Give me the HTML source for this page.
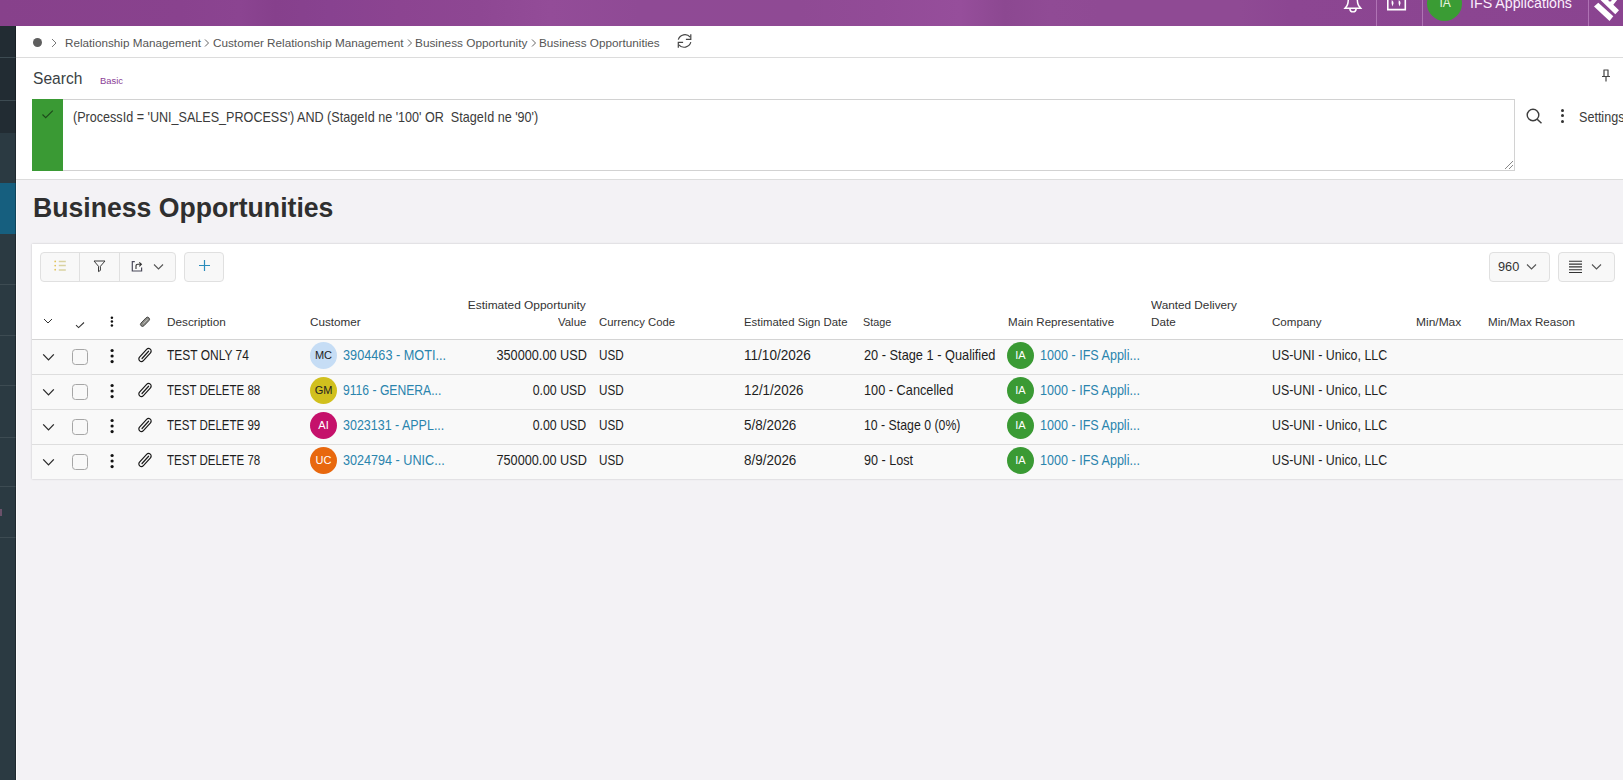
<!DOCTYPE html>
<html><head><meta charset="utf-8">
<style>
html,body{margin:0;padding:0;}
body{width:1623px;height:780px;overflow:hidden;position:relative;background:#f3f2f5;font-family:"Liberation Sans",sans-serif;}
.t{position:absolute;white-space:nowrap;}
.a{position:absolute;}
</style></head><body>
<div class="a" style="left:0;top:0;width:1623px;height:26px;background:linear-gradient(90deg,#87418b 0px,#89428e 180px,#8b4491 240px,#86408c 275px,#884290 330px,#8c4491 400px,#8e4793 480px,#934c98 550px,#8f4a95 640px,#8f4a94 800px,#924b97 880px,#964e9b 960px,#8c4891 1005px,#904b95 1050px,#8f4a94 1100px,#8f4a94 1240px,#8c4692 1290px,#8a4490 1623px);"></div>
<div class="a" style="left:1376px;top:0;width:1px;height:26px;background:rgba(220,170,225,.45);"></div>
<div class="a" style="left:1422px;top:0;width:1px;height:26px;background:rgba(220,170,225,.45);"></div>
<div class="a" style="left:1588px;top:0;width:1px;height:26px;background:rgba(220,170,225,.45);"></div>
<svg class="a" style="left:1338px;top:0" width="30" height="14" viewBox="0 0 30 14"><path d="M10.3 -1 Q10.3 5 7.8 7.2 L7 8.2 H22.8 L22 7.2 Q19.3 5 19.3 -1" fill="none" stroke="#fff" stroke-width="1.5"/><path d="M11.8 8.6 Q12 11.9 15 11.9 Q18 11.9 18.2 8.6" fill="none" stroke="#fff" stroke-width="1.4"/></svg>
<svg class="a" style="left:1384px;top:0" width="26" height="14" viewBox="0 0 26 14"><path d="M3.8 -1 V9.6 H21.3 V-1" fill="none" stroke="#fff" stroke-width="1.6"/><path d="M7.8 0 Q10 1.5 9.5 3.5 Q9 5 8.3 6.5 Q7 3.5 7.8 0 Z M14.8 0 Q17 1.5 16.5 3.5 Q16 5 15.3 6.5 Q14 3.5 14.8 0 Z" fill="#fff"/></svg>
<div class="a" style="left:1427px;top:-14px;width:35px;height:35px;border-radius:50%;background:#3a9c34;"></div>
<div class="t" style="left:1439.50px;top:-3.00px;font-size:12px;line-height:12px;color:#e8f5e0;">IA</div>
<div class="t" style="left:1470.00px;top:-4.00px;font-size:14.6px;line-height:14.6px;color:#fbeefd;transform:scaleX(0.9744);transform-origin:0 0;">IFS Applications</div>
<svg class="a" style="left:1585px;top:0" width="38" height="26" viewBox="0 0 38 26"><path d="M9 6.5 L13.3 2.7 L28.3 16.3 L24.5 21 Z" fill="#fff"/><path d="M15 -0.5 L32.5 -0.5 L28.3 4.7 L34 10.3 L30.3 14.3 Z" fill="#fff"/><circle cx="25" cy="0" r="1.6" fill="#8a4390"/></svg>
<div class="a" style="left:0;top:26px;width:16px;height:754px;background:#2b3a42;"></div>
<div class="a" style="left:0;top:26px;width:16px;height:107px;background:#222c33;"></div>
<div class="a" style="left:0;top:183px;width:16px;height:51px;background:#165f7f;"></div>
<div class="a" style="left:0;top:57px;width:16px;height:1px;background:#3d4b52;"></div>
<div class="a" style="left:0;top:100px;width:16px;height:1px;background:#3d4b52;"></div>
<div class="a" style="left:0;top:284px;width:16px;height:1px;background:#3d4b52;"></div>
<div class="a" style="left:0;top:335px;width:16px;height:1px;background:#3d4b52;"></div>
<div class="a" style="left:0;top:385px;width:16px;height:1px;background:#3d4b52;"></div>
<div class="a" style="left:0;top:437px;width:16px;height:1px;background:#3d4b52;"></div>
<div class="a" style="left:0;top:486px;width:16px;height:1px;background:#3d4b52;"></div>
<div class="a" style="left:0;top:537px;width:16px;height:1px;background:#3d4b52;"></div>
<div class="a" style="left:15px;top:26px;width:1px;height:754px;background:rgba(0,0,0,.28);"></div>
<div class="a" style="left:0;top:509px;width:2px;height:7px;background:rgba(160,100,140,.55);"></div>
<div class="a" style="left:16px;top:179px;width:1px;height:601px;background:#fbfbfc;"></div>
<div class="a" style="left:16px;top:26px;width:1607px;height:31px;background:#fff;border-bottom:1px solid #dcdcdc;"></div>
<div class="a" style="left:33px;top:38px;width:9px;height:9px;border-radius:50%;background:#5e5e5e;"></div>
<svg class="a" style="left:50px;top:38px" width="8" height="10" viewBox="0 0 8 10"><path d="M2 1 L6 5 L2 9" fill="none" stroke="#777" stroke-width="1"/></svg>
<div class="t" style="left:64.70px;top:38.00px;font-size:11.8px;line-height:11.8px;color:#555;transform:scaleX(0.9919);transform-origin:0 0;">Relationship Management</div>
<div class="t" style="left:212.50px;top:38.00px;font-size:11.8px;line-height:11.8px;color:#555;transform:scaleX(0.9947);transform-origin:0 0;">Customer Relationship Management</div>
<div class="t" style="left:414.60px;top:38.00px;font-size:11.8px;line-height:11.8px;color:#555;transform:scaleX(1.0021);transform-origin:0 0;">Business Opportunity</div>
<div class="t" style="left:539.00px;top:38.00px;font-size:11.8px;line-height:11.8px;color:#555;transform:scaleX(0.9945);transform-origin:0 0;">Business Opportunities</div>
<svg class="a" style="left:203.9px;top:38px" width="6" height="10" viewBox="0 0 6 10"><path d="M1 1.5 L4.5 5 L1 8.5" fill="none" stroke="#666" stroke-width="1"/></svg>
<svg class="a" style="left:406.5px;top:38px" width="6" height="10" viewBox="0 0 6 10"><path d="M1 1.5 L4.5 5 L1 8.5" fill="none" stroke="#666" stroke-width="1"/></svg>
<svg class="a" style="left:530.5px;top:38px" width="6" height="10" viewBox="0 0 6 10"><path d="M1 1.5 L4.5 5 L1 8.5" fill="none" stroke="#666" stroke-width="1"/></svg>
<svg class="a" style="left:670px;top:30px" width="30" height="22" viewBox="0 0 30 22"><g fill="none" stroke="#444" stroke-width="1.2"><path d="M8.3 9.6 A6.9 6.9 0 0 1 20.2 7.2"/><path d="M20.8 4.2 V9.3 H15.9"/><path d="M20.8 12.2 A6.9 6.9 0 0 1 8.9 14.8"/><path d="M8.3 17.8 V12.3 H13.1"/></g></svg>
<div class="a" style="left:16px;top:58px;width:1607px;height:121px;background:#fff;border-bottom:1px solid #dcdcdc;"></div>
<div class="t" style="left:32.60px;top:70.00px;font-size:17.4px;line-height:17.4px;color:#3a3f44;transform:scaleX(0.8956);transform-origin:0 0;">Search</div>
<div class="t" style="left:99.60px;top:76.00px;font-size:9.6px;line-height:9.6px;color:#8a3d96;transform:scaleX(0.9799);transform-origin:0 0;">Basic</div>
<svg class="a" style="left:1600px;top:69px" width="12" height="13" viewBox="0 0 12 13"><path d="M3.5 1 H8.5 M4 1 V7 M8 1 V7 M2 7.5 H10 M6 7.5 V12.5" fill="none" stroke="#444" stroke-width="1.2"/></svg>
<div class="a" style="left:32px;top:99px;width:1481px;height:70px;background:#fff;border:1px solid #d2d2d2;"></div>
<div class="a" style="left:32px;top:99px;width:31px;height:72px;background:#3a9a34;"></div>
<svg class="a" style="left:41px;top:109px" width="14" height="11" viewBox="0 0 14 11"><path d="M1.5 5.5 L4.7 8.7 L11.8 1.6" fill="none" stroke="#1d4a1b" stroke-width="1.15"/></svg>
<div class="t" style="left:72.90px;top:110.00px;font-size:14.2px;line-height:14.2px;color:#3b3b3b;transform:scaleX(0.8869);transform-origin:0 0;">(ProcessId = 'UNI_SALES_PROCESS') AND (StageId ne '100' OR&nbsp; StageId ne '90')</div>
<svg class="a" style="left:1504px;top:160px" width="10" height="10" viewBox="0 0 10 10"><path d="M1 9 L9 1 M5 9 L9 5" stroke="#888" stroke-width="1"/></svg>
<svg class="a" style="left:1526px;top:108px" width="17" height="16" viewBox="0 0 17 16"><circle cx="7" cy="7" r="5.8" fill="none" stroke="#3d3d3d" stroke-width="1.4"/><path d="M11.2 11.2 L15.5 15.2" stroke="#3d3d3d" stroke-width="1.5"/></svg>
<div class="a" style="left:1560.5px;top:108.5px;width:3px;height:3px;border-radius:50%;background:#333;"></div>
<div class="a" style="left:1560.5px;top:114.0px;width:3px;height:3px;border-radius:50%;background:#333;"></div>
<div class="a" style="left:1560.5px;top:119.5px;width:3px;height:3px;border-radius:50%;background:#333;"></div>
<div class="t" style="left:1579.00px;top:110.00px;font-size:14.2px;line-height:14.2px;color:#3b3b3b;transform:scaleX(0.8864);transform-origin:0 0;">Settings</div>
<div class="t" style="left:33.00px;top:194.00px;font-size:27.3px;line-height:27.3px;color:#2f2f2f;font-weight:bold;transform:scaleX(0.9758);transform-origin:0 0;">Business Opportunities</div>
<div class="a" style="left:32px;top:244px;width:1591px;height:235px;background:#fff;box-shadow:0 0 2px rgba(0,0,0,.2);"></div>
<div class="a" style="left:40px;top:252px;width:134px;height:28px;background:#f8f8f8;border:1px solid #e0e0e0;border-radius:4px;"></div>
<div class="a" style="left:79px;top:253px;width:1px;height:28px;background:#e0e0e0;"></div>
<div class="a" style="left:119px;top:253px;width:1px;height:28px;background:#e0e0e0;"></div>
<div class="a" style="left:184px;top:252px;width:38px;height:28px;background:#f8f8f8;border:1px solid #e0e0e0;border-radius:4px;"></div>
<svg class="a" style="left:53px;top:259px" width="15" height="13" viewBox="0 0 15 13"><g fill="#e2c45a"><circle cx="2.2" cy="2.4" r="0.9"/><circle cx="2.2" cy="6.6" r="0.9"/><circle cx="2.2" cy="10.7" r="0.9"/></g><g stroke="#d9d2a0" stroke-width="1.5"><path d="M5.8 2.6 H12.8 M5.8 6.6 H12.8 M5.8 11 H12.8"/></g></svg>
<svg class="a" style="left:93px;top:259.5px" width="13" height="13" viewBox="0 0 13 13"><path d="M1 1 H12 L7.4 6.3 V10.4 L5.5 11.6 V6.3 Z" fill="none" stroke="#3a3a3a" stroke-width="1" stroke-linejoin="round"/></svg>
<svg class="a" style="left:131px;top:260px" width="12" height="13" viewBox="0 0 12 13"><path d="M3.8 1.6 H1.3 V11 H10.6 V7.5" fill="none" stroke="#4a4a5a" stroke-width="1.2"/><path d="M5 9 V6 Q5 4.3 6.8 4.3 H10.3 M8.3 2.3 L10.4 4.3 L8.3 6.3" fill="none" stroke="#333" stroke-width="1.1"/></svg>
<svg class="a" style="left:153px;top:263px" width="11" height="8" viewBox="0 0 11 8"><path d="M1 1.5 L5.5 6 L10 1.5" fill="none" stroke="#555" stroke-width="1.1"/></svg>
<svg class="a" style="left:198px;top:259px" width="13" height="13" viewBox="0 0 13 13"><path d="M6.5 1 V12 M1 6.5 H12" stroke="#2a8cbc" stroke-width="1.2"/></svg>
<div class="a" style="left:1489px;top:252px;width:59px;height:28px;background:#f8f8f8;border:1px solid #e0e0e0;border-radius:4px;"></div>
<div class="t" style="left:1498.20px;top:260.00px;font-size:13.4px;line-height:13.4px;color:#333;transform:scaleX(0.9518);transform-origin:0 0;">960</div>
<svg class="a" style="left:1526px;top:263px" width="11" height="8" viewBox="0 0 11 8"><path d="M1 1.5 L5.5 6 L10 1.5" fill="none" stroke="#555" stroke-width="1.1"/></svg>
<div class="a" style="left:1558px;top:252px;width:55px;height:28px;background:#f8f8f8;border:1px solid #e0e0e0;border-radius:4px;"></div>
<svg class="a" style="left:1568px;top:259px" width="15" height="15" viewBox="0 0 15 15"><path d="M1 2.3 H14 M1 5.1 H14 M1 7.9 H14 M1 10.8 H14 M1 13.5 H14" stroke="#333" stroke-width="1.1"/></svg>
<svg class="a" style="left:1591px;top:263px" width="11" height="8" viewBox="0 0 11 8"><path d="M1 1.5 L5.5 6 L10 1.5" fill="none" stroke="#555" stroke-width="1.1"/></svg>
<svg class="a" style="left:43px;top:318px" width="10" height="7" viewBox="0 0 10 7"><path d="M1 1 L5 5 L9 1" fill="none" stroke="#333" stroke-width="1"/></svg>
<svg class="a" style="left:75px;top:320.5px" width="10" height="8" viewBox="0 0 10 8"><path d="M1 4.2 L3.6 6.6 L9 1.5" fill="none" stroke="#333" stroke-width="1.05"/></svg>
<svg class="a" style="left:106px;top:312px" width="12" height="18" viewBox="0 0 12 18"><circle cx="5.9" cy="5.7" r="1.25" fill="#111"/><circle cx="5.9" cy="9.5" r="1.25" fill="#111"/><circle cx="5.9" cy="13.4" r="1.25" fill="#111"/></svg>
<svg class="a" style="left:134.6px;top:311.5px;" width="20" height="20" viewBox="0 0 20 20"><g transform="translate(10 9.8) rotate(-46)"><rect x="-5.6" y="-2" width="11.2" height="4" rx="2" fill="#8a8a84" stroke="#3a3a3a" stroke-width="0.85"/><path d="M-2.5 0.1 H3.5" stroke="#ccc" stroke-width="0.7"/></g></svg>
<div class="t" style="left:166.60px;top:317.00px;font-size:11.8px;line-height:11.8px;color:#333;transform:scaleX(0.9966);transform-origin:0 0;">Description</div>
<div class="t" style="left:310.30px;top:317.00px;font-size:11.8px;line-height:11.8px;color:#333;transform:scaleX(0.9911);transform-origin:0 0;">Customer</div>
<div class="t" style="left:598.80px;top:317.00px;font-size:11.8px;line-height:11.8px;color:#333;transform:scaleX(0.9590);transform-origin:0 0;">Currency Code</div>
<div class="t" style="left:743.50px;top:317.00px;font-size:11.8px;line-height:11.8px;color:#333;transform:scaleX(0.9623);transform-origin:0 0;">Estimated Sign Date</div>
<div class="t" style="left:863.00px;top:317.00px;font-size:11.8px;line-height:11.8px;color:#333;transform:scaleX(0.9171);transform-origin:0 0;">Stage</div>
<div class="t" style="left:1007.60px;top:317.00px;font-size:11.8px;line-height:11.8px;color:#333;transform:scaleX(0.9805);transform-origin:0 0;">Main Representative</div>
<div class="t" style="left:1151.30px;top:300.00px;font-size:11.8px;line-height:11.8px;color:#333;transform:scaleX(0.9972);transform-origin:0 0;">Wanted Delivery</div>
<div class="t" style="left:1151.30px;top:317.00px;font-size:11.8px;line-height:11.8px;color:#333;transform:scaleX(0.9920);transform-origin:0 0;">Date</div>
<div class="t" style="left:1271.70px;top:317.00px;font-size:11.8px;line-height:11.8px;color:#333;transform:scaleX(0.9821);transform-origin:0 0;">Company</div>
<div class="t" style="left:1416.20px;top:317.00px;font-size:11.8px;line-height:11.8px;color:#333;transform:scaleX(1.0156);transform-origin:0 0;">Min/Max</div>
<div class="t" style="left:1487.90px;top:317.00px;font-size:11.8px;line-height:11.8px;color:#333;transform:scaleX(0.9813);transform-origin:0 0;">Min/Max Reason</div>
<div class="t" style="right:1036.81px;top:300.00px;font-size:11.8px;line-height:11.8px;color:#333;transform:scaleX(1.0106);transform-origin:100% 0;">Estimated Opportunity</div>
<div class="t" style="right:1036.82px;top:317.00px;font-size:11.8px;line-height:11.8px;color:#333;transform:scaleX(0.9651);transform-origin:100% 0;">Value</div>
<div class="a" style="left:32px;top:338.5px;width:1591px;height:1.5px;background:#d4d4d4;"></div>
<div class="a" style="left:32px;top:340px;width:1591px;height:34px;background:#f9f9f9;"></div>
<div class="a" style="left:32px;top:374px;width:1591px;height:1px;background:#dedede;"></div>
<svg class="a" style="left:41.5px;top:353px" width="13" height="9" viewBox="0 0 13 9"><path d="M1.2 1.4 L6.5 6.9 L11.8 1.4" fill="none" stroke="#2a2a2a" stroke-width="1.3"/></svg>
<div class="a" style="left:72px;top:349px;width:14px;height:14px;border:1px solid #a6a6a6;border-radius:3.5px;background:transparent;"></div>
<svg class="a" style="left:106px;top:340px" width="12" height="30" viewBox="0 0 12 30"><circle cx="6.1" cy="10.5" r="1.6" fill="#111"/><circle cx="6.1" cy="16" r="1.6" fill="#111"/><circle cx="6.1" cy="21.6" r="1.6" fill="#111"/></svg>
<svg class="a" style="left:135px;top:344.5px;" width="20" height="20" viewBox="0 0 20 20"><g transform="translate(10 10) rotate(-48)"><rect x="-7.9" y="-2.6" width="15.8" height="5.2" rx="2.6" fill="none" stroke="#1a1a1a" stroke-width="1.2"/><path d="M-4.6 0.15 H5.2" stroke="#1a1a1a" stroke-width="1.2" stroke-linecap="round"/></g></svg>
<div class="t" style="left:166.60px;top:348.00px;font-size:14.6px;line-height:14.6px;color:#1e1e1e;transform:scaleX(0.8207);transform-origin:0 0;">TEST ONLY 74</div>
<div class="a" style="left:310px;top:342px;width:27px;height:27px;border-radius:50%;background:#c6ddf5;"></div>
<div class="a" style="left:310px;top:342px;width:27px;height:27px;line-height:27px;text-align:center;font-size:11px;color:#222;">MC</div>
<div class="t" style="left:343.00px;top:348.00px;font-size:14.6px;line-height:14.6px;color:#2a84ad;transform:scaleX(0.8702);transform-origin:0 0;">3904463 - MOTI...</div>
<div class="t" style="right:1036.58px;top:348.00px;font-size:14.6px;line-height:14.6px;color:#1e1e1e;transform:scaleX(0.8702);transform-origin:100% 0;">350000.00 USD</div>
<div class="t" style="left:599.20px;top:348.00px;font-size:14.6px;line-height:14.6px;color:#1e1e1e;transform:scaleX(0.8018);transform-origin:0 0;">USD</div>
<div class="t" style="left:743.70px;top:348.00px;font-size:14.6px;line-height:14.6px;color:#1e1e1e;transform:scaleX(0.9295);transform-origin:0 0;">11/10/2026</div>
<div class="a" style="left:863px;top:340px;width:133px;height:34px;overflow:hidden;"><div class="t" style="left:0.80px;top:8.00px;font-size:14.6px;line-height:14.6px;color:#1e1e1e;transform:scaleX(0.8757);transform-origin:0 0;">20 - Stage 1 - Qualified</div>
</div>
<div class="a" style="left:1007px;top:342px;width:27px;height:27px;border-radius:50%;background:#3a9a34;"></div>
<div class="a" style="left:1007px;top:342px;width:27px;height:27px;line-height:27px;text-align:center;font-size:11px;color:#fff;">IA</div>
<div class="t" style="left:1040.00px;top:348.00px;font-size:14.6px;line-height:14.6px;color:#2a84ad;transform:scaleX(0.8615);transform-origin:0 0;">1000 - IFS Appli...</div>
<div class="t" style="left:1272.00px;top:348.00px;font-size:14.6px;line-height:14.6px;color:#1e1e1e;transform:scaleX(0.8503);transform-origin:0 0;">US-UNI - Unico, LLC</div>
<div class="a" style="left:32px;top:375px;width:1591px;height:34px;background:#f9f9f9;"></div>
<div class="a" style="left:32px;top:409px;width:1591px;height:1px;background:#dedede;"></div>
<svg class="a" style="left:41.5px;top:388px" width="13" height="9" viewBox="0 0 13 9"><path d="M1.2 1.4 L6.5 6.9 L11.8 1.4" fill="none" stroke="#2a2a2a" stroke-width="1.3"/></svg>
<div class="a" style="left:72px;top:384px;width:14px;height:14px;border:1px solid #a6a6a6;border-radius:3.5px;background:transparent;"></div>
<svg class="a" style="left:106px;top:375px" width="12" height="30" viewBox="0 0 12 30"><circle cx="6.1" cy="10.5" r="1.6" fill="#111"/><circle cx="6.1" cy="16" r="1.6" fill="#111"/><circle cx="6.1" cy="21.6" r="1.6" fill="#111"/></svg>
<svg class="a" style="left:135px;top:379.5px;" width="20" height="20" viewBox="0 0 20 20"><g transform="translate(10 10) rotate(-48)"><rect x="-7.9" y="-2.6" width="15.8" height="5.2" rx="2.6" fill="none" stroke="#1a1a1a" stroke-width="1.2"/><path d="M-4.6 0.15 H5.2" stroke="#1a1a1a" stroke-width="1.2" stroke-linecap="round"/></g></svg>
<div class="t" style="left:166.60px;top:383.00px;font-size:14.6px;line-height:14.6px;color:#1e1e1e;transform:scaleX(0.7894);transform-origin:0 0;">TEST DELETE 88</div>
<div class="a" style="left:310px;top:377px;width:27px;height:27px;border-radius:50%;background:#d1c01e;"></div>
<div class="a" style="left:310px;top:377px;width:27px;height:27px;line-height:27px;text-align:center;font-size:11px;color:#222;">GM</div>
<div class="t" style="left:343.00px;top:383.00px;font-size:14.6px;line-height:14.6px;color:#2a84ad;transform:scaleX(0.8317);transform-origin:0 0;">9116 - GENERA...</div>
<div class="t" style="right:1036.59px;top:383.00px;font-size:14.6px;line-height:14.6px;color:#1e1e1e;transform:scaleX(0.8469);transform-origin:100% 0;">0.00 USD</div>
<div class="t" style="left:599.20px;top:383.00px;font-size:14.6px;line-height:14.6px;color:#1e1e1e;transform:scaleX(0.8018);transform-origin:0 0;">USD</div>
<div class="t" style="left:743.70px;top:383.00px;font-size:14.6px;line-height:14.6px;color:#1e1e1e;transform:scaleX(0.9173);transform-origin:0 0;">12/1/2026</div>
<div class="a" style="left:863px;top:375px;width:133px;height:34px;overflow:hidden;"><div class="t" style="left:0.80px;top:8.00px;font-size:14.6px;line-height:14.6px;color:#1e1e1e;transform:scaleX(0.8732);transform-origin:0 0;">100 - Cancelled</div>
</div>
<div class="a" style="left:1007px;top:377px;width:27px;height:27px;border-radius:50%;background:#3a9a34;"></div>
<div class="a" style="left:1007px;top:377px;width:27px;height:27px;line-height:27px;text-align:center;font-size:11px;color:#fff;">IA</div>
<div class="t" style="left:1040.00px;top:383.00px;font-size:14.6px;line-height:14.6px;color:#2a84ad;transform:scaleX(0.8615);transform-origin:0 0;">1000 - IFS Appli...</div>
<div class="t" style="left:1272.00px;top:383.00px;font-size:14.6px;line-height:14.6px;color:#1e1e1e;transform:scaleX(0.8503);transform-origin:0 0;">US-UNI - Unico, LLC</div>
<div class="a" style="left:32px;top:410px;width:1591px;height:34px;background:#f9f9f9;"></div>
<div class="a" style="left:32px;top:444px;width:1591px;height:1px;background:#dedede;"></div>
<svg class="a" style="left:41.5px;top:423px" width="13" height="9" viewBox="0 0 13 9"><path d="M1.2 1.4 L6.5 6.9 L11.8 1.4" fill="none" stroke="#2a2a2a" stroke-width="1.3"/></svg>
<div class="a" style="left:72px;top:419px;width:14px;height:14px;border:1px solid #a6a6a6;border-radius:3.5px;background:transparent;"></div>
<svg class="a" style="left:106px;top:410px" width="12" height="30" viewBox="0 0 12 30"><circle cx="6.1" cy="10.5" r="1.6" fill="#111"/><circle cx="6.1" cy="16" r="1.6" fill="#111"/><circle cx="6.1" cy="21.6" r="1.6" fill="#111"/></svg>
<svg class="a" style="left:135px;top:414.5px;" width="20" height="20" viewBox="0 0 20 20"><g transform="translate(10 10) rotate(-48)"><rect x="-7.9" y="-2.6" width="15.8" height="5.2" rx="2.6" fill="none" stroke="#1a1a1a" stroke-width="1.2"/><path d="M-4.6 0.15 H5.2" stroke="#1a1a1a" stroke-width="1.2" stroke-linecap="round"/></g></svg>
<div class="t" style="left:166.60px;top:418.00px;font-size:14.6px;line-height:14.6px;color:#1e1e1e;transform:scaleX(0.7894);transform-origin:0 0;">TEST DELETE 99</div>
<div class="a" style="left:310px;top:412px;width:27px;height:27px;border-radius:50%;background:#c5116b;"></div>
<div class="a" style="left:310px;top:412px;width:27px;height:27px;line-height:27px;text-align:center;font-size:11px;color:#fff;">AI</div>
<div class="t" style="left:343.00px;top:418.00px;font-size:14.6px;line-height:14.6px;color:#2a84ad;transform:scaleX(0.8550);transform-origin:0 0;">3023131 - APPL...</div>
<div class="t" style="right:1036.59px;top:418.00px;font-size:14.6px;line-height:14.6px;color:#1e1e1e;transform:scaleX(0.8469);transform-origin:100% 0;">0.00 USD</div>
<div class="t" style="left:599.20px;top:418.00px;font-size:14.6px;line-height:14.6px;color:#1e1e1e;transform:scaleX(0.8018);transform-origin:0 0;">USD</div>
<div class="t" style="left:743.70px;top:418.00px;font-size:14.6px;line-height:14.6px;color:#1e1e1e;transform:scaleX(0.9214);transform-origin:0 0;">5/8/2026</div>
<div class="a" style="left:863px;top:410px;width:133px;height:34px;overflow:hidden;"><div class="t" style="left:0.80px;top:8.00px;font-size:14.6px;line-height:14.6px;color:#1e1e1e;transform:scaleX(0.8431);transform-origin:0 0;">10 - Stage 0 (0%)</div>
</div>
<div class="a" style="left:1007px;top:412px;width:27px;height:27px;border-radius:50%;background:#3a9a34;"></div>
<div class="a" style="left:1007px;top:412px;width:27px;height:27px;line-height:27px;text-align:center;font-size:11px;color:#fff;">IA</div>
<div class="t" style="left:1040.00px;top:418.00px;font-size:14.6px;line-height:14.6px;color:#2a84ad;transform:scaleX(0.8615);transform-origin:0 0;">1000 - IFS Appli...</div>
<div class="t" style="left:1272.00px;top:418.00px;font-size:14.6px;line-height:14.6px;color:#1e1e1e;transform:scaleX(0.8503);transform-origin:0 0;">US-UNI - Unico, LLC</div>
<div class="a" style="left:32px;top:445px;width:1591px;height:34px;background:#f9f9f9;"></div>
<svg class="a" style="left:41.5px;top:458px" width="13" height="9" viewBox="0 0 13 9"><path d="M1.2 1.4 L6.5 6.9 L11.8 1.4" fill="none" stroke="#2a2a2a" stroke-width="1.3"/></svg>
<div class="a" style="left:72px;top:454px;width:14px;height:14px;border:1px solid #a6a6a6;border-radius:3.5px;background:transparent;"></div>
<svg class="a" style="left:106px;top:445px" width="12" height="30" viewBox="0 0 12 30"><circle cx="6.1" cy="10.5" r="1.6" fill="#111"/><circle cx="6.1" cy="16" r="1.6" fill="#111"/><circle cx="6.1" cy="21.6" r="1.6" fill="#111"/></svg>
<svg class="a" style="left:135px;top:449.5px;" width="20" height="20" viewBox="0 0 20 20"><g transform="translate(10 10) rotate(-48)"><rect x="-7.9" y="-2.6" width="15.8" height="5.2" rx="2.6" fill="none" stroke="#1a1a1a" stroke-width="1.2"/><path d="M-4.6 0.15 H5.2" stroke="#1a1a1a" stroke-width="1.2" stroke-linecap="round"/></g></svg>
<div class="t" style="left:166.60px;top:453.00px;font-size:14.6px;line-height:14.6px;color:#1e1e1e;transform:scaleX(0.7894);transform-origin:0 0;">TEST DELETE 78</div>
<div class="a" style="left:310px;top:447px;width:27px;height:27px;border-radius:50%;background:#e8680e;"></div>
<div class="a" style="left:310px;top:447px;width:27px;height:27px;line-height:27px;text-align:center;font-size:11px;color:#fff;">UC</div>
<div class="t" style="left:343.00px;top:453.00px;font-size:14.6px;line-height:14.6px;color:#2a84ad;transform:scaleX(0.8642);transform-origin:0 0;">3024794 - UNIC...</div>
<div class="t" style="right:1036.58px;top:453.00px;font-size:14.6px;line-height:14.6px;color:#1e1e1e;transform:scaleX(0.8702);transform-origin:100% 0;">750000.00 USD</div>
<div class="t" style="left:599.20px;top:453.00px;font-size:14.6px;line-height:14.6px;color:#1e1e1e;transform:scaleX(0.8018);transform-origin:0 0;">USD</div>
<div class="t" style="left:743.70px;top:453.00px;font-size:14.6px;line-height:14.6px;color:#1e1e1e;transform:scaleX(0.9214);transform-origin:0 0;">8/9/2026</div>
<div class="a" style="left:863px;top:445px;width:133px;height:34px;overflow:hidden;"><div class="t" style="left:0.80px;top:8.00px;font-size:14.6px;line-height:14.6px;color:#1e1e1e;transform:scaleX(0.8628);transform-origin:0 0;">90 - Lost</div>
</div>
<div class="a" style="left:1007px;top:447px;width:27px;height:27px;border-radius:50%;background:#3a9a34;"></div>
<div class="a" style="left:1007px;top:447px;width:27px;height:27px;line-height:27px;text-align:center;font-size:11px;color:#fff;">IA</div>
<div class="t" style="left:1040.00px;top:453.00px;font-size:14.6px;line-height:14.6px;color:#2a84ad;transform:scaleX(0.8615);transform-origin:0 0;">1000 - IFS Appli...</div>
<div class="t" style="left:1272.00px;top:453.00px;font-size:14.6px;line-height:14.6px;color:#1e1e1e;transform:scaleX(0.8503);transform-origin:0 0;">US-UNI - Unico, LLC</div>
</body></html>
